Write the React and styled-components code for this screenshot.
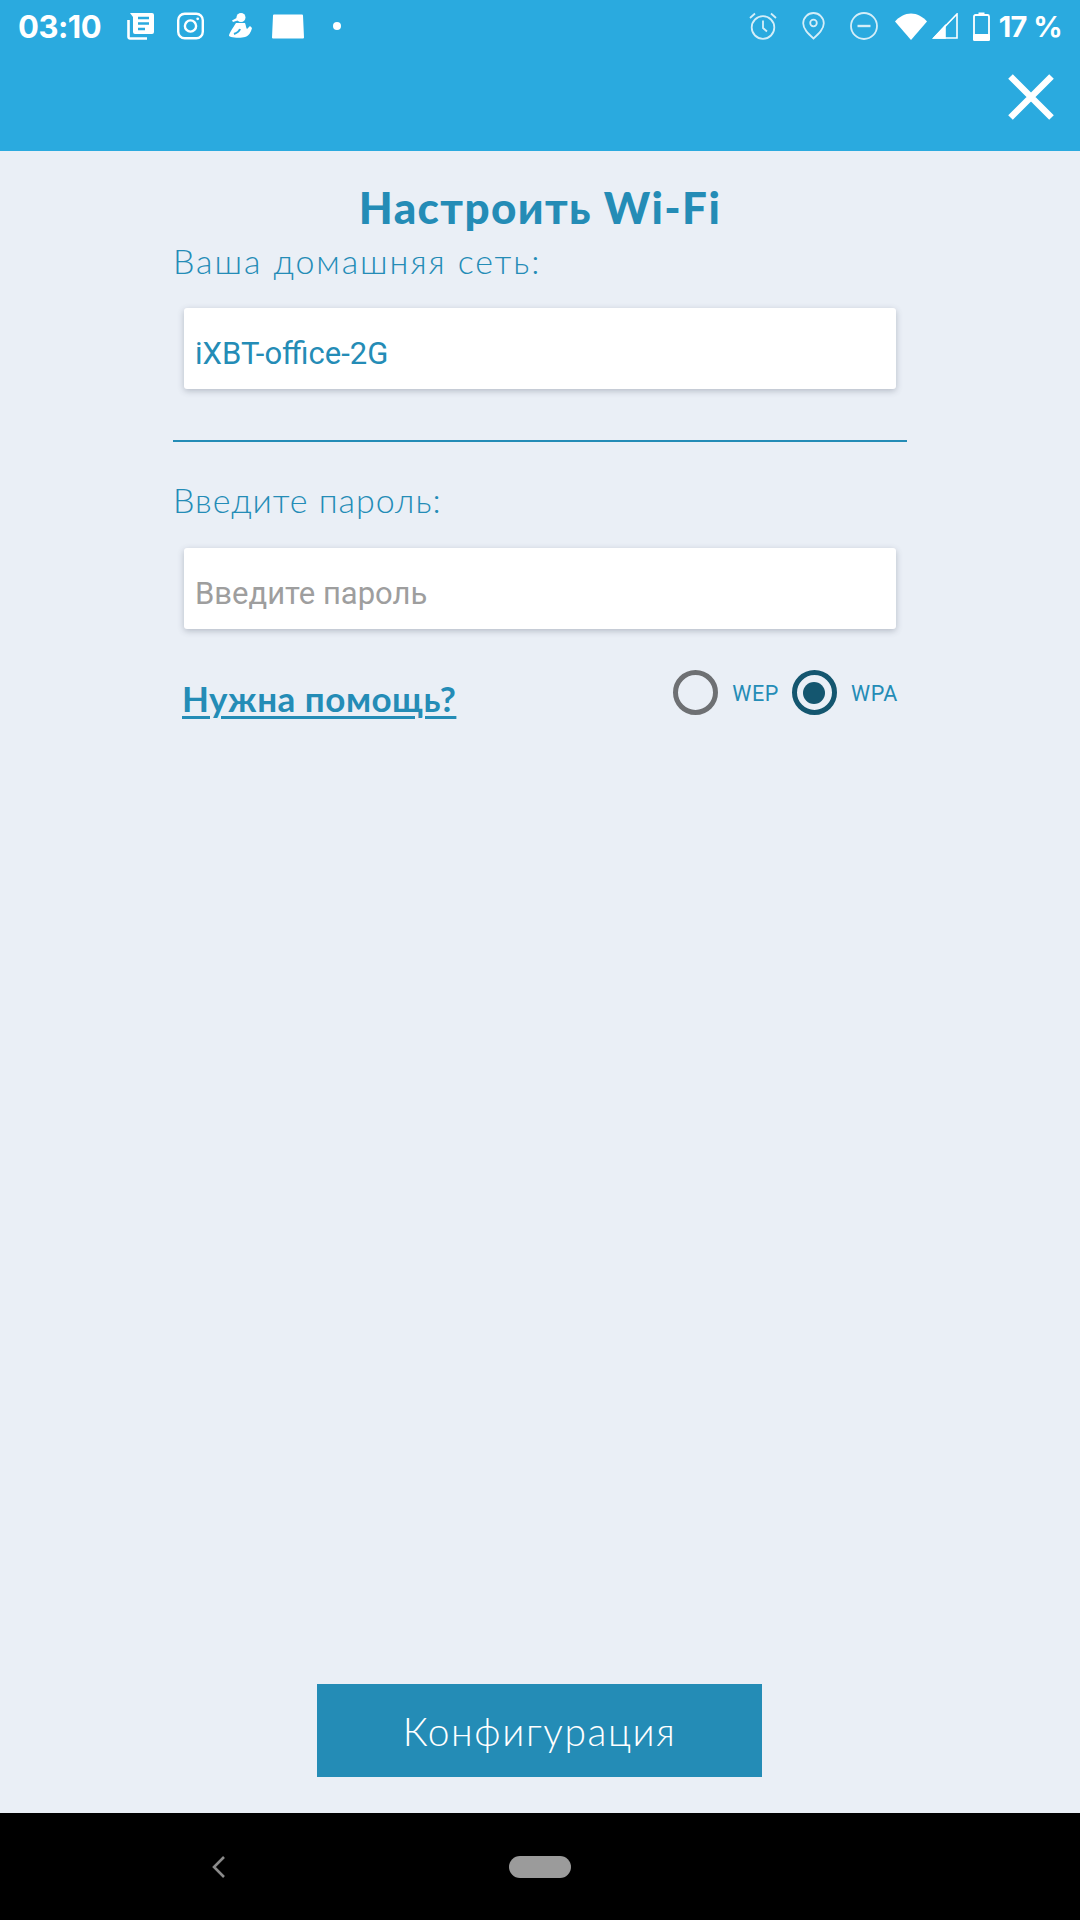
import React from "react";
import styled, { createGlobalStyle } from "styled-components";

const GlobalStyle = createGlobalStyle`
  html, body {
    margin: 0;
    padding: 0;
    background: #eaeff6;
  }
  * {
    box-sizing: border-box;
  }
`;

const Screen = styled.div`
  width: 1080px;
  height: 1920px;
  display: flex;
  flex-direction: column;
  overflow: hidden;
  background: #eaeff6;
`;

const Header = styled.header`
  height: 151px;
  background: #2aaadf;
  color: #fff;
  display: flex;
  flex-direction: column;
`;

const StatusBar = styled.div`
  height: 52px;
  padding: 0 18px;
  display: flex;
  align-items: center;
  justify-content: space-between;
`;

const StatusGroup = styled.div`
  display: flex;
  align-items: center;
`;

const Clock = styled.span`
  font-family: "Inter", "Liberation Sans", sans-serif;
  font-weight: 700;
  font-size: 31px;
  letter-spacing: -0.5px;
  width: 82px;
  white-space: nowrap;
`;

const Battery = styled.span`
  font-family: "Inter", "Liberation Sans", sans-serif;
  font-weight: 700;
  font-size: 29px;
  letter-spacing: -0.6px;
  margin-left: 9px;
  white-space: nowrap;
`;

const Icon = styled.svg`
  display: block;
  flex: none;
  margin-left: ${(p) => p.$ml || 0}px;
`;

const Toolbar = styled.div`
  flex: 1;
  display: flex;
  justify-content: flex-end;
  padding: 22px 26px 0 0;
`;

const Main = styled.main`
  flex: 1;
  display: flex;
  flex-direction: column;
  align-items: center;
  padding: 31px 1px 36px 0;
`;

const Form = styled.div`
  width: 734px;
  margin-left: 1px;
  display: flex;
  flex-direction: column;
`;

const Title = styled.h1`
  margin: 0 0 9px;
  text-align: center;
  font-family: "Lato", "Liberation Sans", sans-serif;
  font-weight: 900;
  font-size: 44px;
  line-height: 50px;
  letter-spacing: 1.4px;
  color: #248cb6;
`;

const Label = styled.label`
  display: block;
  font-family: "Lato", "Liberation Sans", sans-serif;
  font-weight: 300;
  font-size: 34px;
  line-height: 40px;
  letter-spacing: ${(p) => p.$spacing}px;
  color: #248cb6;
`;

const Field = styled.div`
  height: 81px;
  margin: ${(p) => p.$top}px 11px 0;
  padding: 9px 11px 0;
  display: flex;
  align-items: center;
  background: #fff;
  border-radius: 3px;
  box-shadow: 0 2px 6px rgba(60, 70, 90, 0.3);
  font-family: "Roboto", "Liberation Sans", sans-serif;
  font-size: 31px;
  color: ${(p) => (p.$empty ? "#9e9e9e" : "#248cb6")};
`;

const Divider = styled.hr`
  width: 100%;
  height: 2px;
  margin: 51px 0 38px;
  border: 0;
  background: #248cb6;
`;

const OptionsRow = styled.div`
  margin-top: 41px;
  padding: 0 9px;
  display: flex;
  align-items: flex-start;
  justify-content: space-between;
`;

const HelpLink = styled.a`
  margin-top: 8px;
  font-family: "Lato", "Liberation Sans", sans-serif;
  font-weight: 700;
  font-size: 35px;
  line-height: 40px;
  letter-spacing: 0.5px;
  color: #248cb6;
  text-decoration: underline;
  text-decoration-thickness: 3px;
  text-underline-offset: 4px;
`;

const Radios = styled.div`
  display: flex;
  align-items: center;
`;

const Radio = styled.span`
  width: 45px;
  height: 45px;
  margin-left: ${(p) => p.$ml || 0}px;
  display: flex;
  align-items: center;
  justify-content: center;
  border-radius: 50%;
  border: 5px solid ${(p) => (p.$checked ? "#14566f" : "#6e7073")};

  &::after {
    content: "";
    display: ${(p) => (p.$checked ? "block" : "none")};
    width: 22px;
    height: 22px;
    border-radius: 50%;
    background: #14566f;
  }
`;

const RadioText = styled.span`
  margin-left: 14px;
  padding-top: 1px;
  font-family: "Roboto", "Liberation Sans", sans-serif;
  font-size: 21.5px;
  letter-spacing: 0.6px;
  color: #248cb6;
`;

const ConfigButton = styled.button`
  width: 445px;
  height: 93px;
  margin-top: auto;
  padding: 0;
  border: 0;
  background: #248cb6;
  color: #fff;
  font-family: "Lato", "Liberation Sans", sans-serif;
  font-weight: 300;
  font-size: 39px;
  letter-spacing: 1.6px;
`;

const NavBar = styled.nav`
  height: 107px;
  flex: none;
  background: #000;
  display: flex;
  align-items: center;
  padding: 0 0 0 212px;
`;

const HomePill = styled.span`
  width: 62px;
  height: 22px;
  margin-left: 284px;
  border-radius: 11px;
  background: #9b9b9b;
`;

export default function App() {
  return (
    <Screen>
      <GlobalStyle />
      <Header>
        <StatusBar>
          <StatusGroup>
            <Clock>03:10</Clock>
            {/* news */}
            <Icon $ml={27} width="28" height="28" viewBox="0 0 28 28" fill="none">
              <path d="M6 1h19a2 2 0 0 1 2 2v17a2 2 0 0 1-2 2H8a2 2 0 0 1-2-2V5L3 1z" fill="#fff" />
              <path d="M11 6h11M11 11.500h11M11 17h7" stroke="#2aaadf" strokeWidth="2.500" />
              <path d="M1.500 8v17a1.500 1.500 0 0 0 1.500 1.500h17" stroke="#fff" strokeWidth="2.600" />
            </Icon>
            {/* instagram */}
            <Icon $ml={22} width="27" height="28" viewBox="0 0 27 28" fill="none" stroke="#fff" strokeWidth="2.400">
              <rect x="1.200" y="1.700" width="24.600" height="24.600" rx="6.500" />
              <circle cx="13.500" cy="14" r="5.600" />
              <circle cx="20.700" cy="6.800" r="1.400" fill="#fff" stroke="none" />
            </Icon>
            {/* running figure */}
            <Icon $ml={24} width="24" height="26" viewBox="0 0 24 26" fill="#fff">
              <circle cx="13" cy="4.500" r="4.500" />
              <path d="M9.500 4.500L4 7.500l1 1.500 6-2z" />
              <path d="M8 10h9c1 2 1 5 2 6l3-3 2 2c-1 4-3 8-7 9-3 1-10 1-14 0l-2-1c0-3 4-8 7-13z" />
              <path d="M6 21c3-1 5-2 6-5" stroke="#2aaadf" strokeWidth="2" fill="none" />
            </Icon>
            {/* card */}
            <Icon $ml={20} width="32" height="25" viewBox="0 0 32 25" fill="#fff">
              <path d="M2 .5l28 0q1 0 1 1l1 22q0 1-1 1H1q-1 0-1-1l1-22q0-1 1-1z" />
            </Icon>
            <Icon $ml={29} width="8" height="8" viewBox="0 0 8 8" fill="#fff">
              <circle cx="4" cy="4" r="4" />
            </Icon>
          </StatusGroup>
          <StatusGroup>
            {/* alarm */}
            <Icon width="28" height="28" viewBox="0 0 28 28" fill="none" stroke="#fff" strokeWidth="1.800" opacity="0.8">
              <circle cx="14" cy="15.500" r="11.300" />
              <path d="M14 8.500v7.500l4 3.500M1 6l5-4.500M27 6l-5-4.500" />
            </Icon>
            {/* location */}
            <Icon $ml={25} width="23" height="28" viewBox="0 0 23 28" fill="none" stroke="#fff" strokeWidth="1.800" opacity="0.8">
              <path d="M11.500 26.500C6 21.500 1.200 17 1.200 11.300a10.300 10.300 0 0 1 20.600 0c0 5.700-4.800 10.200-10.300 15.200z" />
              <circle cx="11.500" cy="11" r="3.300" />
            </Icon>
            {/* do not disturb */}
            <Icon $ml={25} width="28" height="28" viewBox="0 0 28 28" fill="none" stroke="#fff" strokeWidth="1.800" opacity="0.8">
              <circle cx="14" cy="14" r="13" />
              <path d="M7.500 14h13" strokeWidth="2.400" />
            </Icon>
            {/* wifi */}
            <Icon $ml={17} width="32" height="27" viewBox="0 0 32 27" fill="#fff">
              <path d="M16 27L0 8.500C4 4 10 .5 16 .5s12 3.500 16 8z" />
            </Icon>
            {/* signal */}
            <Icon $ml={5} width="26" height="26" viewBox="0 0 26 26" fill="none">
              <path d="M25 1v24H2z" stroke="#fff" strokeWidth="1.600" />
              <path d="M13 13v12H2z" fill="#fff" stroke="#fff" strokeWidth="1.600" />
            </Icon>
            {/* battery */}
            <Icon $ml={15} width="17" height="29" viewBox="0 0 17 29" fill="none">
              <path d="M5.500 2.500V.5h6v2" fill="#fff" />
              <rect x="1" y="3" width="15" height="25" rx="1.500" stroke="#fff" strokeWidth="1.800" />
              <rect x="0" y="22" width="17" height="7" rx="1.500" fill="#fff" />
            </Icon>
            <Battery>17 %</Battery>
          </StatusGroup>
        </StatusBar>
        <Toolbar>
          <svg width="46" height="46" viewBox="0 0 46 46" stroke="#fff" strokeWidth="6.500" fill="none">
            <path d="M2.500 2.500l41 41M43.500 2.500l-41 41" />
          </svg>
        </Toolbar>
      </Header>
      <Main>
        <Form>
          <Title>Настроить Wi-Fi</Title>
          <Label $spacing={1.9}>Ваша домашняя сеть:</Label>
          <Field $top={27}>iXBT-office-2G</Field>
          <Divider />
          <Label $spacing={1}>Введите пароль:</Label>
          <Field $top={28} $empty>
            Введите пароль
          </Field>
          <OptionsRow>
            <HelpLink href="#">Нужна помощь?</HelpLink>
            <Radios>
              <Radio />
              <RadioText>WEP</RadioText>
              <Radio $ml={13} $checked />
              <RadioText>WPA</RadioText>
            </Radios>
          </OptionsRow>
        </Form>
        <ConfigButton>Конфигурация</ConfigButton>
      </Main>
      <NavBar>
        <svg width="13" height="22" viewBox="0 0 13 22" fill="none" stroke="#8a8a8a" strokeWidth="2.600">
          <path d="M12 1L2 11l10 10" />
        </svg>
        <HomePill />
      </NavBar>
    </Screen>
  );
}
